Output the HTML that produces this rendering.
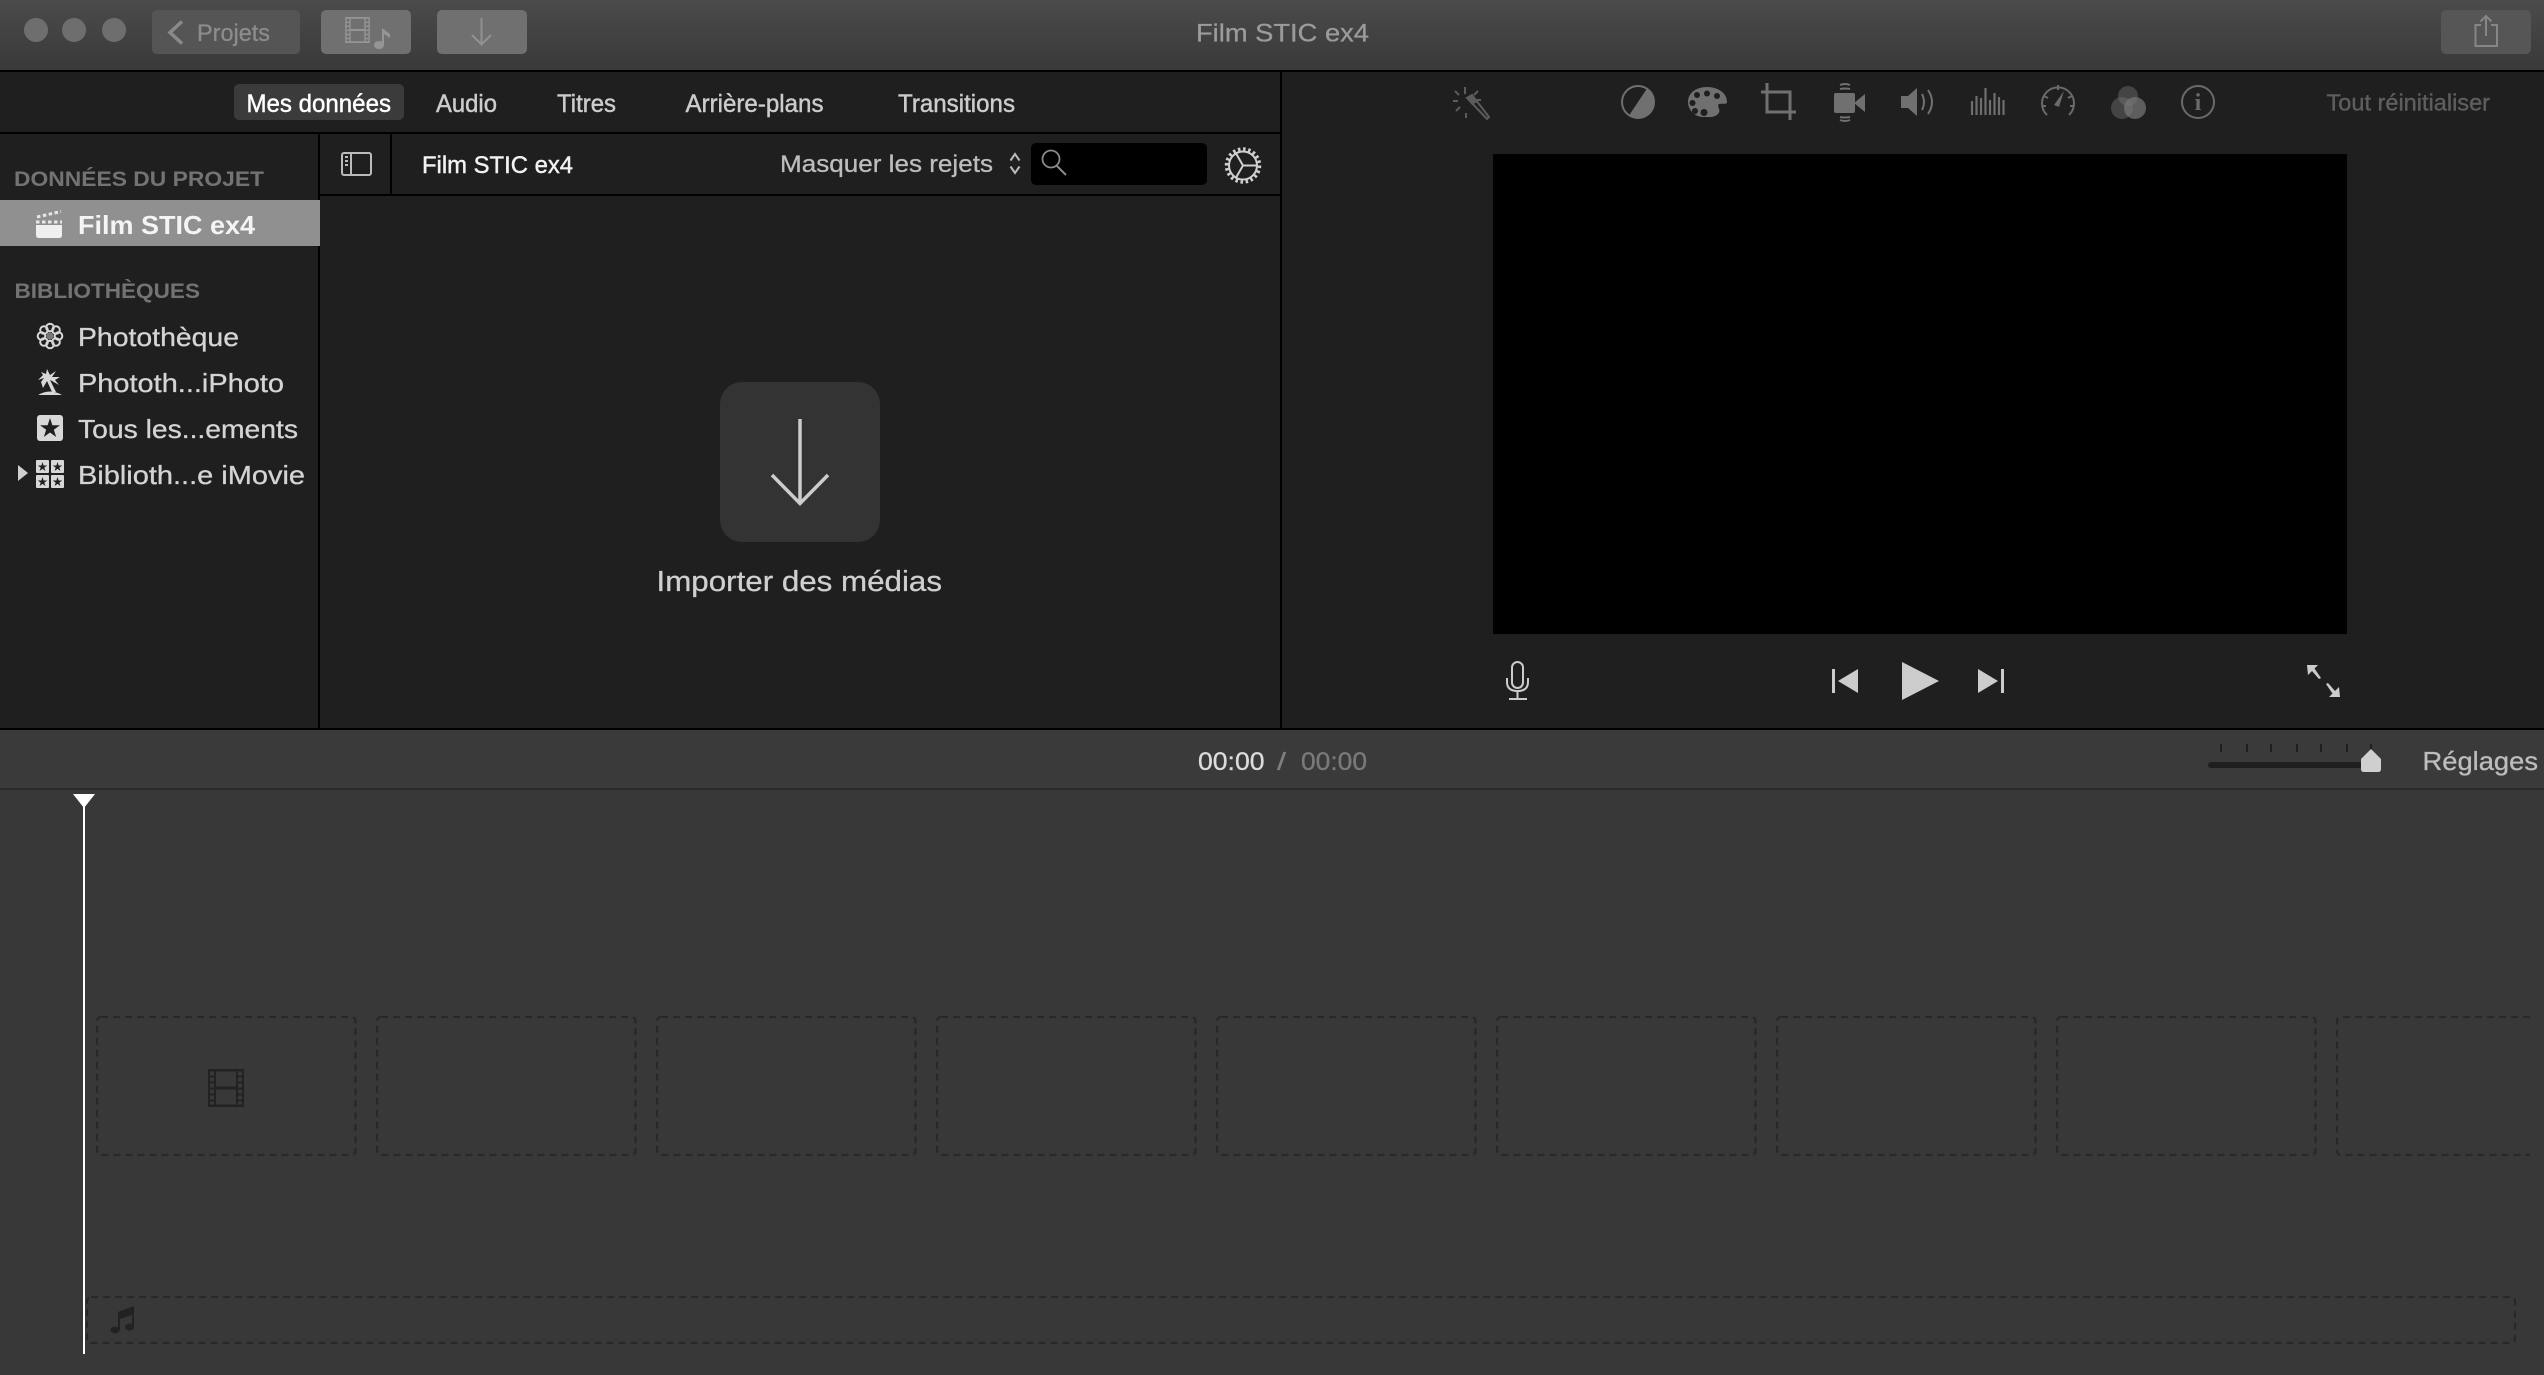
<!DOCTYPE html>
<html lang="fr">
<head>
<meta charset="utf-8">
<title>Film STIC ex4</title>
<style>
html,body{margin:0;padding:0;background:#383838;width:2544px;height:1375px;overflow:hidden}
svg{display:block}
text{font-family:"Liberation Sans",sans-serif;white-space:pre}
</style>
</head>
<body>
<svg xmlns="http://www.w3.org/2000/svg" width="2544" height="1375" viewBox="0 0 2544 1375">
<defs>
<linearGradient id="tb" x1="0" y1="0" x2="0" y2="1"><stop offset="0" stop-color="#4b4b4b"/><stop offset="1" stop-color="#393939"/></linearGradient>
<symbol id="film" viewBox="0 0 36 38">
<path fill="currentColor" fill-rule="evenodd" d="M0 0H36V38H0Z M8 2.500H28V17.500H8Z M8 20.500H28V35.500H8Z M2 2.500H6V6.500H2Z M2 8.500H6V12.500H2Z M2 14.500H6V18.500H2Z M2 20.500H6V24.500H2Z M2 26.500H6V30.500H2Z M2 32.500H6V35.500H2Z M30 2.500H34V6.500H30Z M30 8.500H34V12.500H30Z M30 14.500H34V18.500H30Z M30 20.500H34V24.500H30Z M30 26.500H34V30.500H30Z M30 32.500H34V35.500H30Z"/>
</symbol>
<polygon id="star" points="0,-1 .225,-.309 .951,-.309 .363,.118 .588,.809 0,.382 -.588,.809 -.363,.118 -.951,-.309 -.225,-.309"/>
</defs>

<!-- backgrounds -->
<rect width="2544" height="1375" fill="#383838"/>
<rect width="2544" height="70" fill="url(#tb)"/>
<rect y="70" width="2544" height="2" fill="#000"/>
<rect y="72" width="2544" height="656" fill="#1f1f1f"/>
<rect y="132" width="1280" height="2" fill="#000"/>
<rect x="1280" y="72" width="2" height="656" fill="#000"/>
<rect x="318" y="134" width="2" height="594" fill="#000"/>
<rect x="320" y="194" width="960" height="2" fill="#000"/>
<rect x="390" y="134" width="2" height="60" fill="#000"/>
<rect y="728" width="2544" height="2" fill="#000"/>
<rect y="730" width="2544" height="58" fill="#3a3a3a"/>
<rect y="788" width="2544" height="2" fill="#2b2b2b"/>

<!-- title bar -->
<circle cx="36" cy="30" r="12" fill="#6e6e6e"/>
<circle cx="74" cy="30" r="12" fill="#6e6e6e"/>
<circle cx="114" cy="30" r="12" fill="#6e6e6e"/>
<rect x="152" y="10" width="148" height="44" rx="5" fill="#555"/>
<path d="M182 21.500L170 32.500L182 43.500" fill="none" stroke="#8a8a8a" stroke-width="3.500"/>
<text x="197" y="41" font-size="24" fill="#8c8c8c" stroke="#8c8c8c" stroke-width=".3" textLength="73" lengthAdjust="spacingAndGlyphs">Projets</text>
<rect x="321" y="10" width="90" height="44" rx="5" fill="#707070"/>
<use href="#film" x="344" y="17" width="27" height="26" preserveAspectRatio="none" style="color:#959595"/>
<ellipse cx="379" cy="45" rx="5" ry="4" fill="#959595"/>
<path d="M382 45V28L390 34V38L384 34V45Z" fill="#959595"/>
<rect x="437" y="10" width="90" height="44" rx="5" fill="#707070"/>
<path d="M481.500 18V44M472 35L481.500 44.500L491 35" fill="none" stroke="#919191" stroke-width="2"/>
<text x="1196" y="41.500" font-size="25" fill="#9b9b9b" stroke="#9b9b9b" stroke-width=".3" textLength="173" lengthAdjust="spacingAndGlyphs">Film STIC ex4</text>
<rect x="2441" y="10" width="90" height="44" rx="5" fill="#565656"/>
<path d="M2481 25H2475.500V46H2497V25H2491M2486 36V16M2480.500 21.500L2486 16L2491.500 21.500" fill="none" stroke="#868686" stroke-width="2"/>

<!-- tabs -->
<rect x="234" y="84" width="170" height="36" rx="5" fill="#3b3b3b"/>
<g stroke-width=".45">
<text x="246.500" y="112" font-size="25" fill="#fff" stroke="#fff" textLength="144.500" lengthAdjust="spacingAndGlyphs">Mes données</text>
<text x="436" y="112" font-size="25" fill="#ccc" stroke="#ccc" textLength="61" lengthAdjust="spacingAndGlyphs">Audio</text>
<text x="557" y="112" font-size="25" fill="#ccc" stroke="#ccc" textLength="59" lengthAdjust="spacingAndGlyphs">Titres</text>
<text x="685.500" y="112" font-size="25" fill="#ccc" stroke="#ccc" textLength="138" lengthAdjust="spacingAndGlyphs">Arrière-plans</text>
<text x="898" y="112" font-size="25" fill="#ccc" stroke="#ccc" textLength="117" lengthAdjust="spacingAndGlyphs">Transitions</text>
</g>

<!-- sidebar -->
<text x="14" y="186" font-size="21" font-weight="bold" fill="#737373" textLength="250" lengthAdjust="spacingAndGlyphs">DONNÉES DU PROJET</text>
<rect y="200" width="320" height="46" fill="#909090"/>
<path d="M36 225H62V235Q62 238 59 238H39Q36 238 36 235Z" fill="#efefef"/>
<path d="M36 222H62" fill="none" stroke="#e8e8e8" stroke-width="3" stroke-dasharray="3.500 2.500"/>
<path d="M37 217L61 211.500" fill="none" stroke="#e8e8e8" stroke-width="3" stroke-dasharray="3.500 2.500"/>
<text x="78" y="234" font-size="26" font-weight="bold" fill="#f4f4f4" textLength="177" lengthAdjust="spacingAndGlyphs">Film STIC ex4</text>
<text x="14.500" y="298" font-size="21" font-weight="bold" fill="#737373" textLength="185.500" lengthAdjust="spacingAndGlyphs">BIBLIOTHÈQUES</text>

<g fill="none" stroke="#d8d8d8" stroke-width="2">
<circle cx="50" cy="327.500" r="3.800"/><circle cx="50" cy="344.500" r="3.800"/>
<circle cx="41.500" cy="336" r="3.800"/><circle cx="58.500" cy="336" r="3.800"/>
<circle cx="44" cy="330" r="3.800"/><circle cx="56" cy="330" r="3.800"/>
<circle cx="44" cy="342" r="3.800"/><circle cx="56" cy="342" r="3.800"/>
</g>
<circle cx="50" cy="336" r="3.500" fill="#777"/>
<g stroke-width=".3">
<text x="78" y="346" font-size="26" fill="#d4d4d4" stroke="#d4d4d4" textLength="161" lengthAdjust="spacingAndGlyphs">Photothèque</text>
<text x="78" y="392" font-size="26" fill="#d4d4d4" stroke="#d4d4d4" textLength="206" lengthAdjust="spacingAndGlyphs">Phototh...iPhoto</text>
<text x="78" y="438" font-size="26" fill="#d4d4d4" stroke="#d4d4d4" textLength="220" lengthAdjust="spacingAndGlyphs">Tous les...ements</text>
<text x="78" y="484" font-size="26" fill="#d4d4d4" stroke="#d4d4d4" textLength="227" lengthAdjust="spacingAndGlyphs">Biblioth...e iMovie</text>
</g>

<path d="M47 369L50 375L56 371L52 377L60 377L55 380L59 385L52 381L50 380L56 392H52L47 381L43 388L41 382L44 378L38 380L43 375L41 372L46 374Z" fill="#d8d8d8"/>
<path d="M38 395Q50 388 62 395Z" fill="#d8d8d8"/>

<rect x="37" y="415" width="26" height="26" rx="3" fill="#d8d8d8"/>
<use href="#star" transform="translate(50 428.500) scale(10.500)" fill="#1f1f1f"/>

<path d="M18 465L28 473L18 481Z" fill="#cfcfcf"/>
<rect x="36" y="460" width="13" height="13" rx="1" fill="#d8d8d8"/><rect x="51" y="460" width="13" height="13" rx="1" fill="#d8d8d8"/>
<rect x="36" y="475" width="13" height="13" rx="1" fill="#d8d8d8"/><rect x="51" y="475" width="13" height="13" rx="1" fill="#d8d8d8"/>
<use href="#star" transform="translate(42.500 467) scale(5)" fill="#1f1f1f"/>
<use href="#star" transform="translate(57.500 467) scale(5)" fill="#1f1f1f"/>
<use href="#star" transform="translate(42.500 482) scale(5)" fill="#1f1f1f"/>
<use href="#star" transform="translate(57.500 482) scale(5)" fill="#1f1f1f"/>

<!-- browser header -->
<rect x="342" y="153" width="29" height="22" rx="2" fill="none" stroke="#bbb" stroke-width="2"/>
<path d="M351 153V175" stroke="#bbb" stroke-width="2"/>
<path d="M345 157H348M345 161H348M345 165H348" stroke="#bbb" stroke-width="2"/>
<text x="422" y="173" font-size="24" fill="#f2f2f2" stroke="#f2f2f2" stroke-width=".45" textLength="151" lengthAdjust="spacingAndGlyphs">Film STIC ex4</text>
<text x="780" y="172" font-size="24" fill="#bdbdbd" stroke="#bdbdbd" stroke-width=".3" textLength="213" lengthAdjust="spacingAndGlyphs">Masquer les rejets</text>
<path d="M1010.500 160.500L1015 154L1019.500 160.500M1010.500 166.500L1015 173L1019.500 166.500" fill="none" stroke="#bbb" stroke-width="2"/>
<rect x="1031" y="143" width="176" height="42" rx="5" fill="#000"/>
<circle cx="1051" cy="159" r="8.500" fill="none" stroke="#8a8a8a" stroke-width="1.800"/>
<path d="M1057 166L1066 175" stroke="#8a8a8a" stroke-width="2"/>
<circle cx="1243" cy="165.500" r="14" fill="none" stroke="#d0d0d0" stroke-width="2"/>
<circle cx="1243" cy="165.500" r="16.500" fill="none" stroke="#d0d0d0" stroke-width="3.500" stroke-dasharray="2.500 2.680"/>
<path d="M1243 165.500H1258M1243 165.500L1235.500 152.500M1243 165.500L1235.500 178.500" stroke="#d0d0d0" stroke-width="2"/>

<!-- import -->
<rect x="720" y="382" width="160" height="160" rx="22" fill="#333"/>
<path d="M800 419V504M772 475L800 503.500L828 475" fill="none" stroke="#cdcdcd" stroke-width="3.500"/>
<text x="656.500" y="591" font-size="29" fill="#cfcfcf" stroke="#cfcfcf" stroke-width=".3" textLength="285.500" lengthAdjust="spacingAndGlyphs">Importer des médias</text>

<!-- viewer toolbar -->
<g stroke="#5c5c5c" stroke-width="2" fill="none">
<path d="M1465 87V94M1455 91L1459 95M1453 101H1458M1456 111L1460 107M1466 113V118M1478 91L1474 95M1477 100H1481"/>
<path d="M1467 98L1472 95L1489 117L1487 119Z"/>
</g>
<path d="M1467 98L1472 95L1477 102L1472 105Z" fill="#5c5c5c"/>
<circle cx="1638" cy="102" r="16" fill="none" stroke="#707070" stroke-width="2"/>
<path d="M1647 88.500A16 16 0 0 1 1629 115.500Z" fill="#707070"/>
<path fill="#707070" fill-rule="evenodd" d="M1707 87C1718 87 1727 93 1727 102C1727 105 1722 103 1719 104C1716 106 1722 110 1718 114C1714 118 1708 117 1703 117C1695 117 1688 110 1688 102C1688 93 1696 87 1707 87Z M1697 92a3 3 0 1 0 .01 0Z M1707 90.500a3 3 0 1 0 .01 0Z M1717 93a3 3 0 1 0 .01 0Z M1692.500 100a3 3 0 1 0 .01 0Z M1695 108a3 3 0 1 0 .01 0Z M1704 109a3.500 3.500 0 1 0 .01 0Z"/>
<path d="M1767 83V112H1796M1761 92H1790V120" fill="none" stroke="#707070" stroke-width="3"/>
<rect x="1834" y="93" width="21" height="20" rx="2" fill="#707070"/>
<path d="M1854 103L1865 94V112Z" fill="#707070"/>
<path d="M1840 85Q1845 83 1850 85M1840 89Q1845 88 1850 89M1840 117Q1845 118 1850 117M1840 120Q1845 122 1850 120" fill="none" stroke="#707070" stroke-width="2"/>
<path d="M1901 96H1908L1917 88V116L1908 108H1901Z" fill="#707070"/>
<path d="M1922 94Q1926 102 1922 110M1928 90Q1936 102 1928 114" fill="none" stroke="#707070" stroke-width="2"/>
<path d="M1972 115V101M1976.500 115V96M1981 115V98M1985.500 115V88M1990 115V100M1994.500 115V93M1999 115V97M2003.500 115V100" stroke="#6e6e6e" stroke-width="2.200"/>
<path d="M2047 115A16 16 0 1 1 2069 115" fill="none" stroke="#6a6a6a" stroke-width="2"/>
<path d="M2058 85V90M2044 96L2048 98M2072 96L2068 98M2042 106H2046M2074 106H2070" stroke="#6a6a6a" stroke-width="2"/>
<path d="M2054 105L2064 91L2059 107Z" fill="#6a6a6a"/>
<g fill="#777">
<circle cx="2122" cy="108" r="11" opacity=".42"/>
<circle cx="2128" cy="96" r="10" opacity=".42"/>
<circle cx="2135" cy="108" r="11" opacity=".72"/>
</g>
<circle cx="2198" cy="102" r="16" fill="none" stroke="#6a6a6a" stroke-width="2"/>
<text x="2198" y="110" font-size="24" font-weight="bold" text-anchor="middle" fill="#6a6a6a" style='font-family:"Liberation Serif",serif'>i</text>
<text x="2326.500" y="110.500" font-size="23" fill="#5e5e5e" stroke="#5e5e5e" stroke-width=".4" textLength="163.500" lengthAdjust="spacingAndGlyphs">Tout réinitialiser</text>

<!-- viewer -->
<rect x="1493" y="154" width="854" height="480" fill="#000"/>

<!-- controls -->
<rect x="1512" y="662" width="11" height="26" rx="5.500" fill="none" stroke="#ccc" stroke-width="2"/>
<path d="M1507 678V682Q1507 691 1517.500 691Q1528 691 1528 682V678M1517.500 691V698M1509 699H1527" fill="none" stroke="#ccc" stroke-width="2"/>
<rect x="1832" y="669" width="3" height="24" fill="#ccc"/>
<path d="M1858 669V693L1838 681Z" fill="#ccc"/>
<path d="M1902 662L1939 681L1902 700Z" fill="#ccc"/>
<path d="M1978 669V693L1998 681Z" fill="#ccc"/>
<rect x="2001" y="669" width="3" height="24" fill="#ccc"/>
<path d="M2307 665H2318L2314.500 668.500L2321 678L2319 679L2312 671L2308 675Z" fill="#ccc"/>
<path d="M2340 697H2329L2332.500 693.500L2326 684L2328 683L2335 691L2339 687Z" fill="#ccc"/>

<!-- timeline bar -->
<g stroke-width=".3">
<text x="1198" y="770" font-size="25" fill="#dcdcdc" stroke="#dcdcdc" textLength="66.500" lengthAdjust="spacingAndGlyphs">00:00</text>
<text x="1277" y="770" font-size="25" fill="#7e7e7e" stroke="#7e7e7e" textLength="9" lengthAdjust="spacingAndGlyphs">/</text>
<text x="1301" y="770" font-size="25" fill="#7a7a7a" stroke="#7a7a7a" textLength="66" lengthAdjust="spacingAndGlyphs">00:00</text>
</g>
<path d="M2221 744V752M2247 744V752M2271 744V752M2297 744V752M2321 744V752M2347 744V752M2371 744V752" stroke="#1f1f1f" stroke-width="2"/>
<rect x="2208" y="762" width="165" height="6" rx="3" fill="#1f1f1f"/>
<path d="M2371 749L2381 759V769Q2381 772 2378 772H2364Q2361 772 2361 769V759Z" fill="#cfcfcf"/>
<text x="2422.500" y="770" font-size="26" fill="#bdbdbd" stroke="#bdbdbd" stroke-width=".3" textLength="115.500" lengthAdjust="spacingAndGlyphs">Réglages</text>

<!-- timeline -->
<g fill="none" stroke="#282828" stroke-width="2.200" stroke-dasharray="7 5">
<rect x="97" y="1017" width="258.500" height="138" rx="4"/>
<rect x="377" y="1017" width="258.500" height="138" rx="4"/>
<rect x="657" y="1017" width="258.500" height="138" rx="4"/>
<rect x="937" y="1017" width="258.500" height="138" rx="4"/>
<rect x="1217" y="1017" width="258.500" height="138" rx="4"/>
<rect x="1497" y="1017" width="258.500" height="138" rx="4"/>
<rect x="1777" y="1017" width="258.500" height="138" rx="4"/>
<rect x="2057" y="1017" width="258.500" height="138" rx="4"/>
<path d="M2530 1017H2341Q2337 1017 2337 1021V1151Q2337 1155 2341 1155H2530"/>
<rect x="87" y="1297" width="2428" height="46" rx="4"/>
</g>
<use href="#film" x="208" y="1069" width="36" height="38" style="color:#222"/>
<ellipse cx="115" cy="1330" rx="4.500" ry="3.500" fill="#222"/>
<ellipse cx="129.500" cy="1327" rx="4.500" ry="3.500" fill="#222"/>
<path d="M118 1330V1312L134 1306V1327H132V1315L120 1319V1330Z" fill="#222"/>

<!-- playhead -->
<rect x="83" y="806" width="2" height="548" fill="#fff"/>
<path d="M73 794H95L84 808Z" fill="#fff"/>
</svg>
</body>
</html>
